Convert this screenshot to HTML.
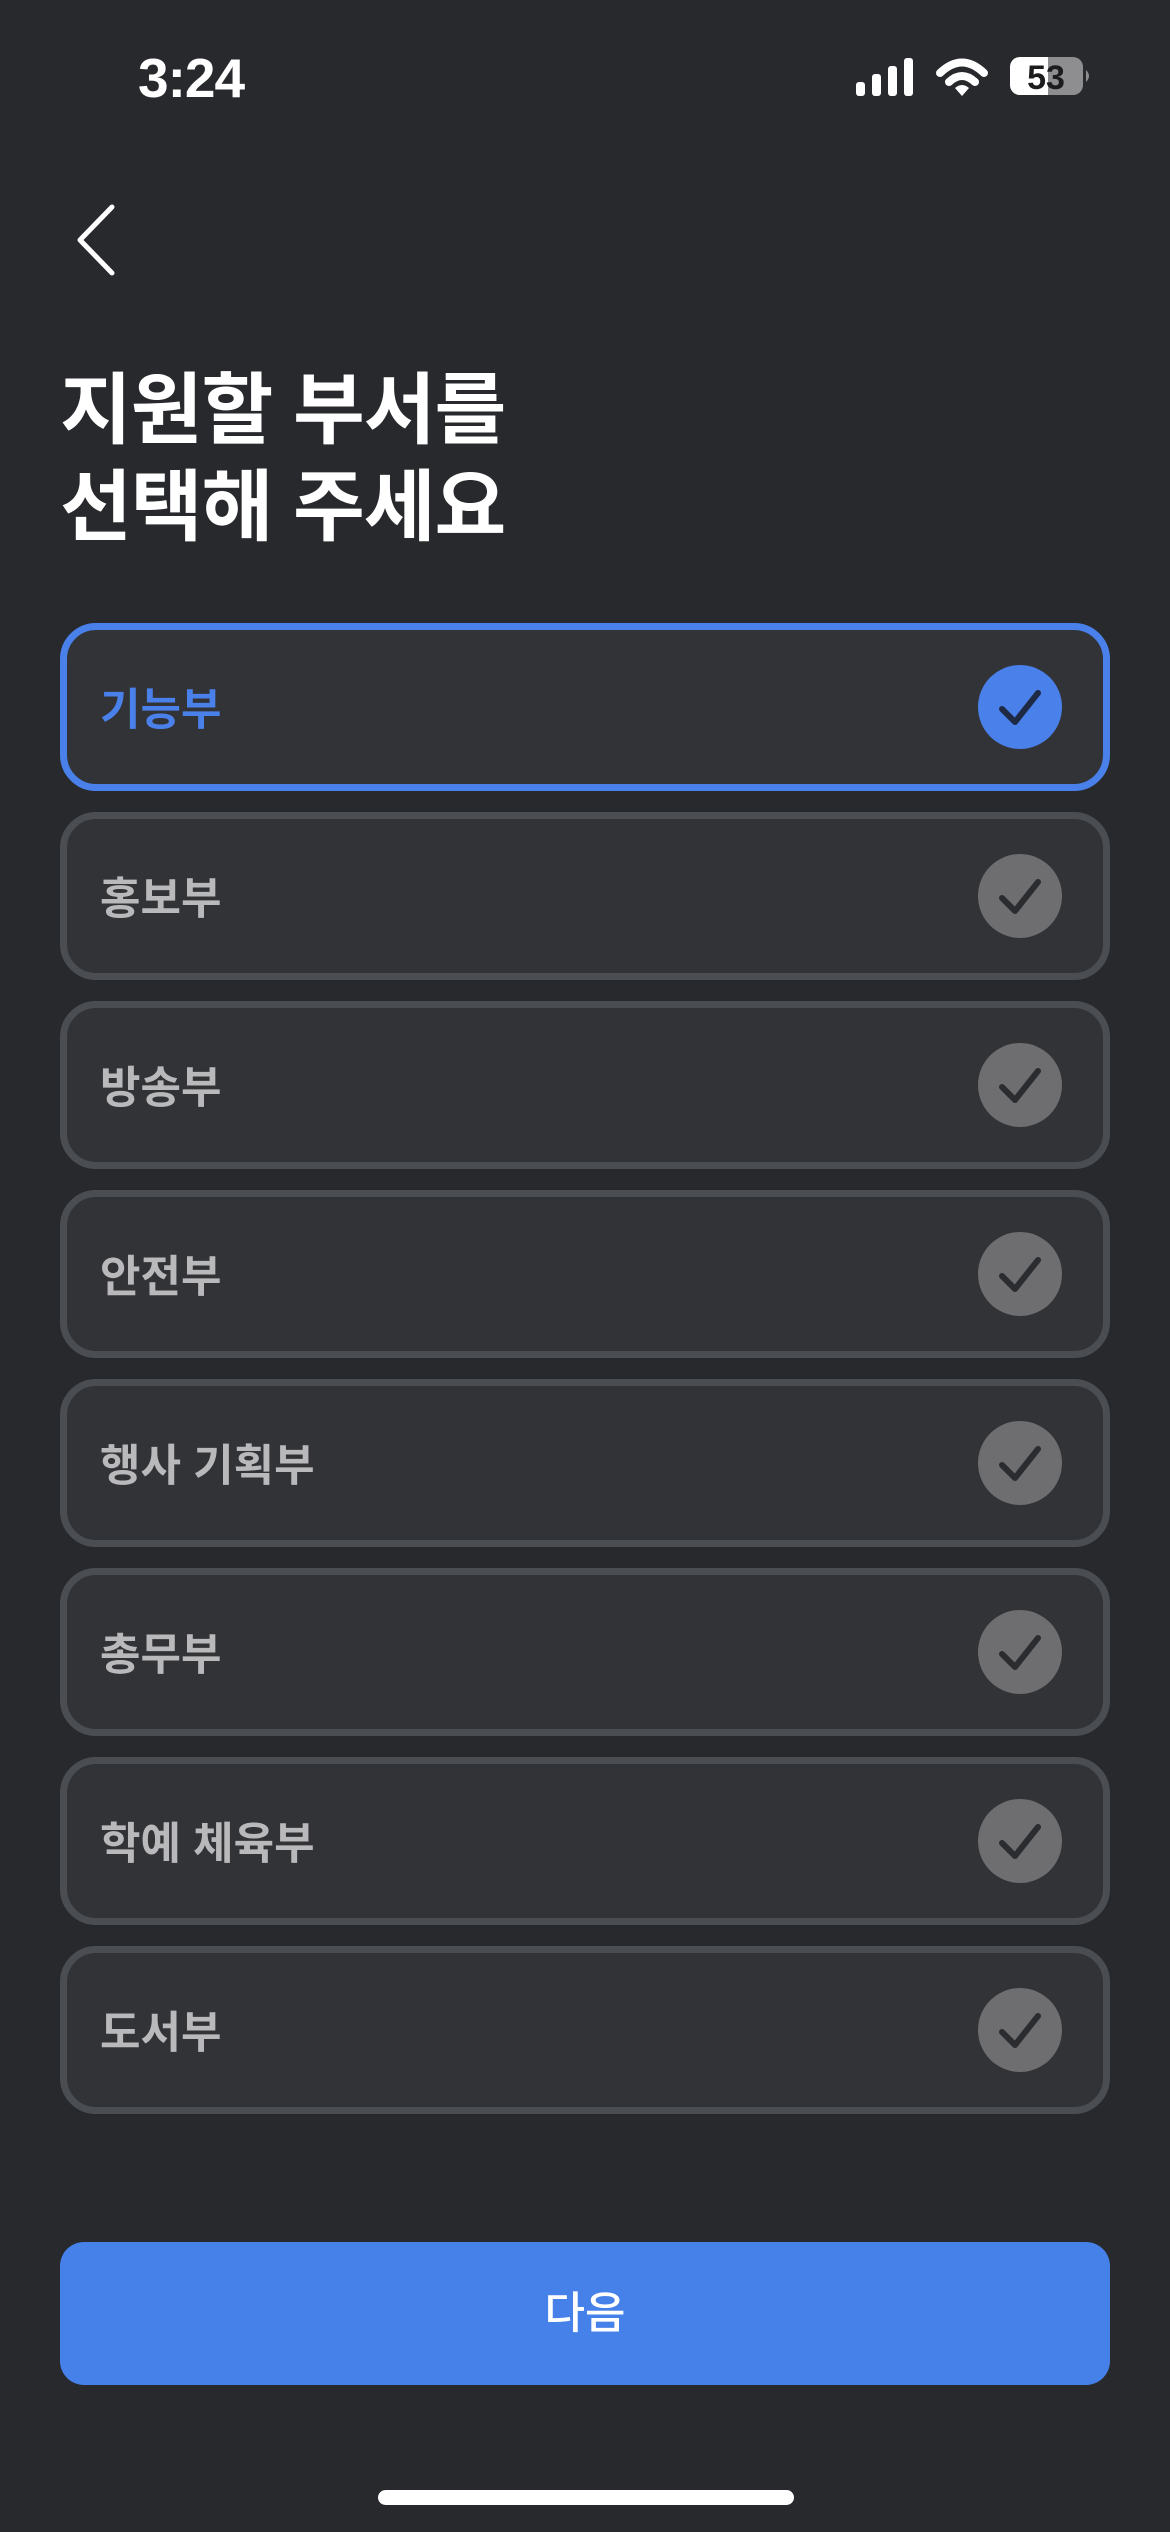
<!DOCTYPE html>
<html><head><meta charset="utf-8"><style>
*{margin:0;padding:0;box-sizing:border-box}
body{width:1170px;height:2532px;background:#27292c;position:relative;overflow:hidden;font-family:"Liberation Sans","Noto Sans CJK KR",sans-serif}
.time{position:absolute;left:138px;top:46px;font-size:55px;font-weight:600;color:#fff;letter-spacing:-1px}
.title{position:absolute;left:60px;top:362px;font-size:78px;font-weight:700;color:#fff;line-height:97px;letter-spacing:-1px}
.card{position:absolute;left:60px;width:1050px;height:168px;border:7px solid #4a4d52;border-radius:36px;background:#323337}
.card.sel{border-color:#4a80ea}
.card span{position:absolute;left:33px;top:50%;transform:translateY(-52%);font-size:44px;font-weight:700;color:#b9b9bb}
.card.sel span{color:#4a80ea}
.chk{position:absolute;left:911px;top:50%;margin-top:-42px;width:84px;height:84px;border-radius:50%;background:#6e6e70}
.card.sel .chk{background:#4a80ea}
.btn{position:absolute;left:60px;top:2242px;width:1050px;height:143px;border-radius:24px;background:#4681ea;color:#fff;font-size:44px;font-weight:500;text-align:center;line-height:143px}
.home{position:absolute;left:378px;top:2490px;width:416px;height:15px;border-radius:8px;background:#fff}
</style></head><body>
<div class="time">3:24</div>
<svg style="position:absolute;left:850px;top:50px" width="250" height="55" viewBox="850 50 250 55">
<rect x="856" y="82" width="9" height="14" rx="3" fill="#fff"/>
<rect x="872" y="74" width="9" height="22" rx="3" fill="#fff"/>
<rect x="888" y="66" width="9" height="30" rx="3" fill="#fff"/>
<rect x="904" y="58" width="9" height="38" rx="3" fill="#fff"/>
<path d="M940 73 Q962 52 984 73" stroke="#fff" stroke-width="8" fill="none" stroke-linecap="round"/>
<path d="M949 82 Q962 70 975 82" stroke="#fff" stroke-width="8" fill="none" stroke-linecap="round"/>
<path d="M955 88 L962 96 L969 88 Q962 82 955 88Z" fill="#fff"/>
<rect x="1010" y="57" width="73" height="38" rx="10" fill="#8e8e90"/>
<path d="M1020 57 H1048 V95 H1020 A10 10 0 0 1 1010 85 V67 A10 10 0 0 1 1020 57Z" fill="#fff"/>
<path d="M1086 70 Q1092 76 1086 82Z" fill="#8e8e90"/>
<text x="1046" y="89" font-size="34" font-weight="700" fill="#1c1c1e" text-anchor="middle" font-family="Liberation Sans">53</text>
</svg>
<svg style="position:absolute;left:70px;top:200px" width="50" height="80"><path d="M42 7 L10 40 L42 73" stroke="#fff" stroke-width="5" fill="none" stroke-linecap="round" stroke-linejoin="round"/></svg>
<div class="title">지원할 부서를<br>선택해 주세요</div>
<div class="card sel" style="top:623px"><span>기능부</span><div class="chk"><svg width="84" height="84"><path d="M24 44 L37 57 L60 28" stroke="#1e2a44" stroke-width="6" fill="none" stroke-linecap="round" stroke-linejoin="round"/></svg></div></div>
<div class="card" style="top:812px"><span>홍보부</span><div class="chk"><svg width="84" height="84"><path d="M24 44 L37 57 L60 28" stroke="#2b2c2f" stroke-width="6" fill="none" stroke-linecap="round" stroke-linejoin="round"/></svg></div></div>
<div class="card" style="top:1001px"><span>방송부</span><div class="chk"><svg width="84" height="84"><path d="M24 44 L37 57 L60 28" stroke="#2b2c2f" stroke-width="6" fill="none" stroke-linecap="round" stroke-linejoin="round"/></svg></div></div>
<div class="card" style="top:1190px"><span>안전부</span><div class="chk"><svg width="84" height="84"><path d="M24 44 L37 57 L60 28" stroke="#2b2c2f" stroke-width="6" fill="none" stroke-linecap="round" stroke-linejoin="round"/></svg></div></div>
<div class="card" style="top:1379px"><span>행사 기획부</span><div class="chk"><svg width="84" height="84"><path d="M24 44 L37 57 L60 28" stroke="#2b2c2f" stroke-width="6" fill="none" stroke-linecap="round" stroke-linejoin="round"/></svg></div></div>
<div class="card" style="top:1568px"><span>총무부</span><div class="chk"><svg width="84" height="84"><path d="M24 44 L37 57 L60 28" stroke="#2b2c2f" stroke-width="6" fill="none" stroke-linecap="round" stroke-linejoin="round"/></svg></div></div>
<div class="card" style="top:1757px"><span>학예 체육부</span><div class="chk"><svg width="84" height="84"><path d="M24 44 L37 57 L60 28" stroke="#2b2c2f" stroke-width="6" fill="none" stroke-linecap="round" stroke-linejoin="round"/></svg></div></div>
<div class="card" style="top:1946px"><span>도서부</span><div class="chk"><svg width="84" height="84"><path d="M24 44 L37 57 L60 28" stroke="#2b2c2f" stroke-width="6" fill="none" stroke-linecap="round" stroke-linejoin="round"/></svg></div></div>
<div class="btn">다음</div>
<div class="home"></div>
</body></html>
